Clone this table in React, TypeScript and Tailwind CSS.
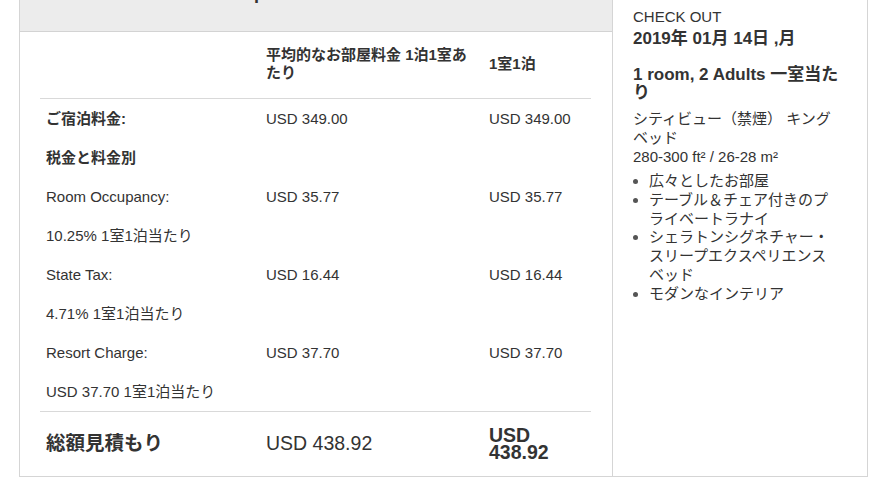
const rows = [
  { label: 'ご宿泊料金:', avg: 'USD 349.00', night: 'USD 349.00', bold: true },
  { label: '税金と料金別', avg: '', night: '', bold: true },
  { label: 'Room Occupancy:', avg: 'USD 35.77', night: 'USD 35.77' },
  { label: '10.25% 1室1泊当たり', avg: '', night: '' },
  { label: 'State Tax:', avg: 'USD 16.44', night: 'USD 16.44' },
  { label: '4.71% 1室1泊当たり', avg: '', night: '' },
  { label: 'Resort Charge:', avg: 'USD 37.70', night: 'USD 37.70' },
  { label: 'USD 37.70 1室1泊当たり', avg: '', night: '' },
];

const amenities = [
  '広々としたお部屋',
  'テーブル＆チェア付きのプライベートラナイ',
  'シェラトンシグネチャー・スリープエクスペリエンスベッド',
  'モダンなインテリア',
];

export default function App() {
  return (
    <div className="w-[875px] h-[490px] overflow-hidden bg-white text-[#333] font-['Liberation_Sans','Noto_Sans_CJK_JP',sans-serif]">
      <div className="-mt-[31px] ml-[19px] w-[849px] flex border border-[#d5d5d5]">
        {/* rate table */}
        <div className="w-[593px] border-r border-[#d5d5d5]">
          <div className="h-[62px] bg-[#ececec] border-b border-[#d3d3d3] pt-[12px] pl-[79px]">
            <h2 className="text-[18px] leading-[22px] font-bold">Room Rate Description</h2>
          </div>
          <div className="px-5">
            <table className="w-[551px] table-fixed border-collapse text-[15px]">
              <colgroup>
                <col className="w-[220px]" />
                <col className="w-[223px]" />
                <col className="w-[108px]" />
              </colgroup>
              <thead>
                <tr className="border-b border-[#d9d9d9]">
                  <th />
                  <th className="px-[6px] pt-[14px] pb-[16px] text-left align-middle font-bold leading-[18px]">
                    平均的なお部屋料金 1泊1室あたり
                  </th>
                  <th className="px-[6px] pt-[14px] pb-[16px] text-left align-middle font-bold leading-[18px]">
                    1室1泊
                  </th>
                </tr>
              </thead>
              <tbody>
                {rows.map((r, i) => (
                  <tr key={i} className={i === rows.length - 1 ? 'border-b border-[#d9d9d9]' : ''}>
                    <td className={`px-[6px] py-[9px] leading-[21px] whitespace-nowrap ${r.bold ? 'font-bold' : ''}`}>{r.label}</td>
                    <td className="px-[6px] py-[9px] leading-[21px]">{r.avg}</td>
                    <td className="px-[6px] py-[9px] leading-[21px]">{r.night}</td>
                  </tr>
                ))}
                <tr>
                  <td className="px-[6px] align-middle text-[19.5px] font-bold">総額見積もり</td>
                  <td className="px-[6px] align-middle text-[19.5px]">USD 438.92</td>
                  <td className="px-[6px] py-[15px] align-middle text-[19.5px] leading-[17px] font-bold">USD 438.92</td>
                </tr>
              </tbody>
            </table>
          </div>
        </div>

        {/* stay summary */}
        <div className="flex-1 pl-5 pt-[37px]">
          <div className="w-[210px]">
            <p className="text-[15px] leading-[19px]">CHECK OUT</p>
            <p className="mt-[2px] text-[17px] leading-[22px] font-bold">2019年 01月 14日 ,月</p>
            <h3 className="mt-[16px] text-[17px] leading-[18px] font-bold">1 room, 2 Adults 一室当たり</h3>
            <p className="mt-[7px] text-[15px] leading-[19px]">シティビュー（禁煙） キングベッド</p>
            <p className="text-[15px] leading-[19px]">280-300 ft² / 26-28 m²</p>
            <ul className="mt-[6px] list-disc pl-4 pr-[6px] text-[15px] leading-[18.8px] marker:text-[#555]">
              {amenities.map((a) => (
                <li key={a}>{a}</li>
              ))}
            </ul>
          </div>
        </div>
      </div>
    </div>
  );
}
